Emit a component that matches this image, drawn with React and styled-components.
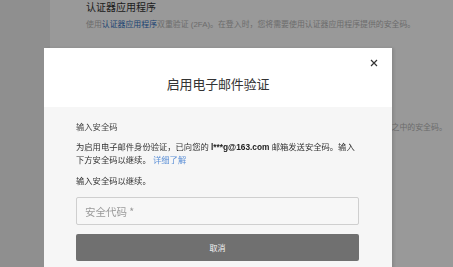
import React from "react";
import styled, { createGlobalStyle } from "styled-components";

const Global = createGlobalStyle`
  html, body { margin: 0; padding: 0; background: #eeeeee; overflow: hidden; }
  body { font-family: "Liberation Sans", "Noto Sans CJK SC", sans-serif; }
  * { box-sizing: border-box; }
`;

const Page = styled.div`
  height: 267px;
  padding-left: 50px;
`;

const Card = styled.div`
  height: 100%;
  background: #ffffff;
  padding: 1px 0 0 36px;
  display: flex;
  flex-direction: column;
`;

const Section = styled.section`
  display: flex;
  flex-direction: column;
  gap: 4px;
  margin-top: ${(p) => p.$top || 0}px;
`;

const SectionTitle = styled.h3`
  margin: 0;
  font-size: 10px;
  line-height: 14px;
  font-weight: normal;
  color: #333;
  white-space: nowrap;
`;

const SectionText = styled.p`
  margin: 0;
  font-size: 7.9px;
  line-height: 12px;
  color: #b5b5b5;
  white-space: nowrap;
`;

const BgLink = styled.span`
  color: #2f6fc0;
`;

const Overlay = styled.div`
  position: fixed;
  inset: 0;
  background: rgba(0, 0, 0, 0.4);
`;

const Modal = styled.div`
  position: fixed;
  top: 48px;
  left: 44px;
  width: 348px;
  height: 240px;
  background: #f6f6f6;
  box-shadow: 2px 0 3px rgba(0, 0, 0, 0.12);
  display: flex;
  flex-direction: column;
`;

const Header = styled.div`
  position: relative;
  height: 59px;
  background: #ffffff;
  display: flex;
  align-items: center;
  justify-content: center;
  padding-top: 11px;
`;

const Title = styled.h2`
  margin: 0;
  font-family: "Noto Sans CJK SC", sans-serif;
  font-size: 13px;
  font-weight: normal;
  color: #333;
  letter-spacing: -0.2px;
`;

const Close = styled.button`
  position: absolute;
  top: 11px;
  right: 14px;
  width: 8px;
  height: 8px;
  padding: 0;
  border: none;
  background: none;
  display: flex;
  cursor: pointer;
`;

const Body = styled.div`
  padding: 14px 33px 0 32px;
  display: flex;
  flex-direction: column;
`;

const Label = styled.div`
  font-size: 8.3px;
  line-height: 13px;
  color: #444;
`;

const Text = styled.p`
  margin: ${(p) => p.$mt || 0}px 0 0;
  font-size: 8.3px;
  line-height: 13px;
  color: #333;
`;

const Email = styled.b`
  font-family: "Liberation Sans", sans-serif;
  font-weight: bold;
  color: #222;
`;

const Link = styled.a`
  color: #5b8fd6;
  text-decoration: none;
`;

const Input = styled.input`
  margin-top: 9px;
  height: 28px;
  width: 100%;
  border: 1px solid #cfcfcf;
  border-radius: 2px;
  background: #f7f7f7;
  padding: 0 8px;
  font-family: "Noto Sans CJK SC", sans-serif;
  font-size: 10.5px;
  color: #333;
  outline: none;
  &::placeholder { color: #9a9a9a; }
`;

const Button = styled.button`
  margin-top: 9px;
  height: 27px;
  width: 100%;
  border: none;
  border-radius: 2px;
  background: #707070;
  color: #f2f2f2;
  font-family: "Noto Sans CJK SC", sans-serif;
  font-size: 8px;
  padding: 0;
`;

export default function App() {
  return (
    <>
      <Global />
      <Page>
        <Card>
          <Section>
            <SectionTitle>认证器应用程序</SectionTitle>
            <SectionText>
              使用<BgLink>认证器应用程序</BgLink>双重验证 (2FA)。在登入时，您将需要使用认证器应用程序提供的安全码。
            </SectionText>
          </Section>
          <Section $top={73}>
            <SectionTitle>电子邮件验证</SectionTitle>
            <SectionText>
              使用电子邮件双重验证 (2FA)。在登入时，您将需要使用系统发送至您所绑定的电子邮箱之中的安全码。
            </SectionText>
          </Section>
        </Card>
      </Page>
      <Overlay />
      <Modal>
        <Header>
          <Title>启用电子邮件验证</Title>
          <Close aria-label="关闭">
            <svg width="8" height="8" viewBox="0 0 8 8">
              <path d="M1 1 L7 7 M7 1 L1 7" stroke="#333" strokeWidth="1.2" fill="none" />
            </svg>
          </Close>
        </Header>
        <Body>
          <Label>输入安全码</Label>
          <Text $mt={7}>
            为启用电子邮件身份验证，已向您的 <Email>l***g@163.com</Email> 邮箱发送安全码。输入
            <br />
            下方安全码以继续。 <Link href="#">详细了解</Link>
          </Text>
          <Text $mt={8}>输入安全码以继续。</Text>
          <Input placeholder="安全代码 *" />
          <Button>取消</Button>
        </Body>
      </Modal>
    </>
  );
}
